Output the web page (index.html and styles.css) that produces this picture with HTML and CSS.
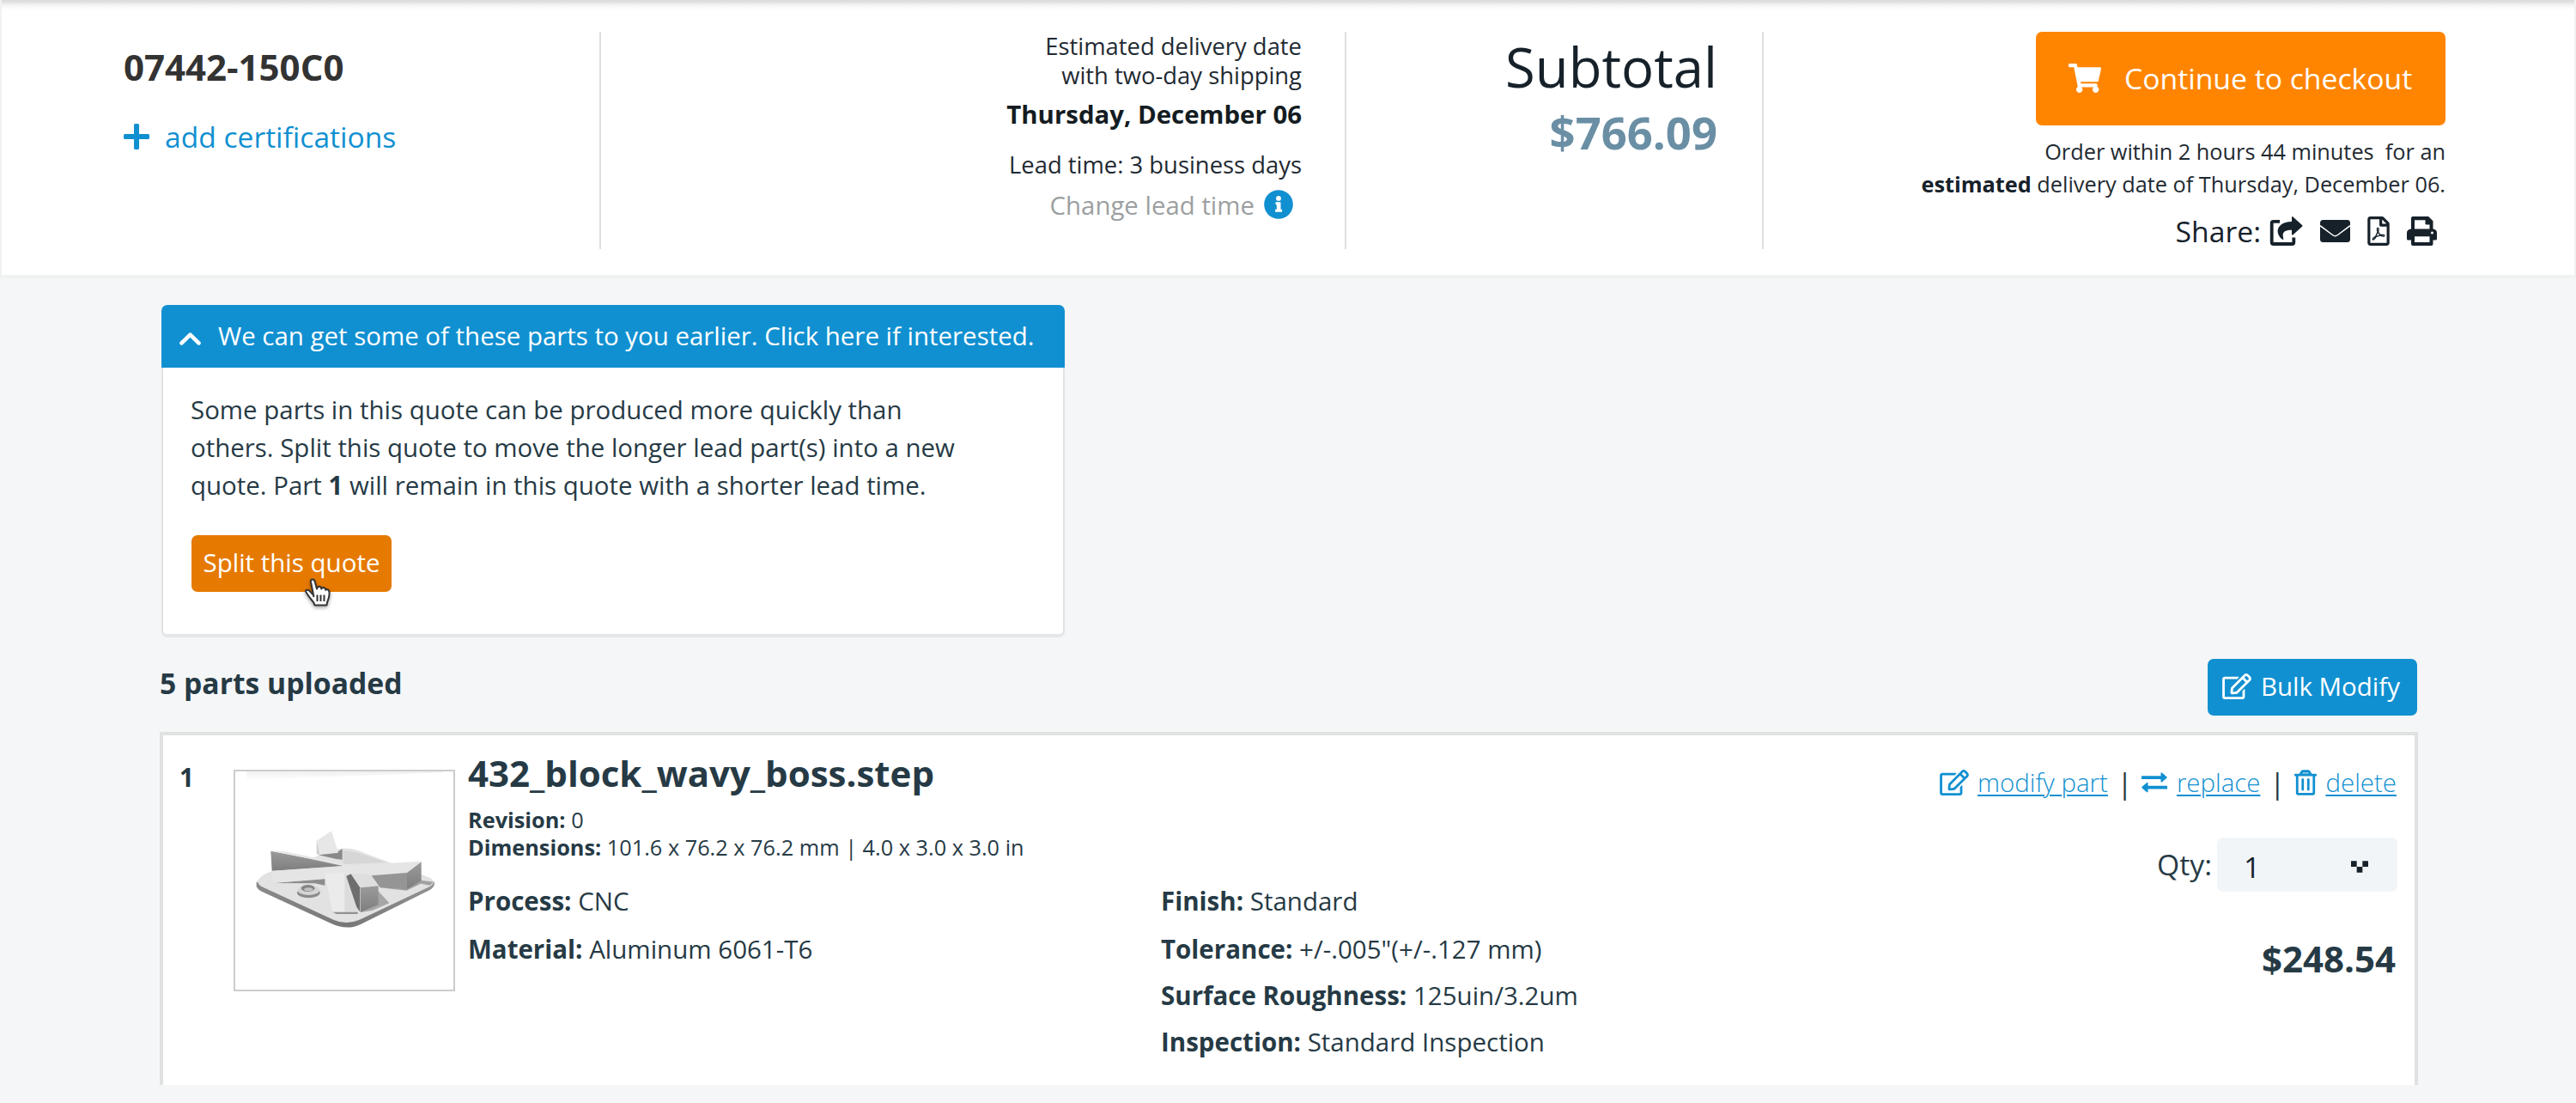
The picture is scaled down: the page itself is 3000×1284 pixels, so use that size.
FILE: index.html
```
<!DOCTYPE html>
<html lang="en">
<head>
<meta charset="utf-8">
<title>Quote 07442-150C0</title>
<link rel="stylesheet" href="styles.css">
</head>
<body>
<svg class="defs" aria-hidden="true">
  <symbol id="edit" viewBox="0 0 576 512"><path d="M402.3 344.9l32-32c5-5 13.7-1.5 13.7 5.7V464c0 26.5-21.5 48-48 48H48c-26.5 0-48-21.5-48-48V112c0-26.5 21.5-48 48-48h273.5c7.1 0 10.7 8.6 5.7 13.7l-32 32c-1.5 1.5-3.5 2.3-5.7 2.3H48v352h352V350.5c0-2.1.8-4.1 2.3-5.6zm156.6-201.8L296.3 405.7l-90.4 10c-26.2 2.9-48.5-19.2-45.6-45.6l10-90.4L432.9 17.1c22.9-22.9 59.9-22.9 82.7 0l43.2 43.2c22.9 22.9 22.9 60 .1 82.8zM460.1 174L402 115.9 216.2 301.8l-7.3 65.3 65.3-7.3L460.1 174zm64.8-79.7l-43.2-43.2c-4.1-4.1-10.8-4.1-14.8 0L436 82l58.1 58.1 30.9-30.9c4-4.2 4-10.8-.1-14.9z"/></symbol>
</svg>

<header class="summary">
  <section class="col col-quote">
    <h1 class="quote-id">07442-150C0</h1>
    <a class="add-cert">
      <svg class="icon-plus" viewBox="0 0 30 30"><path d="M12 1.500q0-1.500 1.500-1.500h3q1.500 0 1.500 1.500V12h10.500q1.500 0 1.500 1.500v3q0 1.500-1.500 1.500H18v10.500q0 1.500-1.500 1.500h-3q-1.500 0-1.500-1.500V18H1.500Q0 18 0 16.500v-3Q0 12 1.500 12H12z"/></svg>
      <span>add certifications</span>
    </a>
  </section>

  <section class="col col-delivery">
    <p class="small">Estimated delivery date<br>with two-day shipping</p>
    <p class="date">Thursday, December 06</p>
    <p class="small lead">Lead time: 3 business days</p>
    <p class="change">
      <span>Change lead time</span>
      <svg class="icon-info" viewBox="0 0 34 34"><circle cx="17" cy="17" r="16.800" fill="#1190d1"/><path fill="#fff" d="M17 7a2.900 2.900 0 1 1 0 5.800a2.900 2.900 0 0 1 0-5.800zM13.500 14.300h6v8.400h1.600v3h-8v-3h1.700v-5.400h-1.300z"/></svg>
    </p>
  </section>

  <section class="col col-total">
    <p class="subtotal">Subtotal</p>
    <p class="amount">$766.09</p>
  </section>

  <section class="col-checkout">
    <button class="checkout">
      <svg class="icon-cart" viewBox="0 0 576 512"><path d="M528.12 301.319l47.273-208C578.806 78.301 567.391 64 551.99 64H159.208l-9.166-44.81C147.758 8.021 137.93 0 126.529 0H24C10.745 0 0 10.745 0 24v16c0 13.255 10.745 24 24 24h69.883l70.248 343.435C147.325 417.1 136 435.222 136 456c0 30.928 25.072 56 56 56s56-25.072 56-56c0-15.674-6.447-29.835-16.824-40h209.647C430.447 426.165 424 440.326 424 456c0 30.928 25.072 56 56 56s56-25.072 56-56c0-22.172-12.888-41.332-31.579-50.405l5.517-24.276c3.413-15.018-8.002-29.319-23.403-29.319H218.117l-6.545-32h293.145c11.206 0 20.92-7.754 23.403-18.681z"/></svg>
      <span>Continue to checkout</span>
    </button>
    <p class="order-by">Order within 2 hours 44 minutes&nbsp; for an<br><b>estimated</b> delivery date of Thursday, December 06.</p>
    <div class="share">
      <span class="share-label">Share:</span>
      <svg class="icon-share" viewBox="0 0 39 34"><path fill="none" stroke="#16212a" stroke-width="3.800" stroke-linejoin="round" d="M12 5.900H4.500q-1.800 0-1.800 1.800V30.200q0 1.800 1.800 1.800H26.500q1.800 0 1.800-1.800V24.500"/><path fill="#16212a" d="M26 1.200q0-1.900 1.500-.6L38 10q.9.900 0 1.800L27.500 21.200q-1.500 1.200-1.500-.6V15.800c-7.500 0-12 2-9.800 9.500q.5 2.500-1.500 1.200C5.500 19 8.500 6.500 26 6.100z"/></svg>
      <svg class="icon-mail" viewBox="0 0 35 26"><rect width="35" height="26" rx="3.500" fill="#16212a"/><path fill="none" stroke="#fff" stroke-width="1.500" d="M0 6.700L14.500 17.500Q17.500 19.800 20.500 17.500L35 6.700"/></svg>
      <svg class="icon-pdf" viewBox="0 0 384 512"><path d="M369.9 97.9L286 14C277 5 264.8-.1 252.1-.1H48C21.5 0 0 21.5 0 48v416c0 26.500 21.500 48 48 48h288c26.500 0 48-21.500 48-48V131.9c0-12.700-5.100-25-14.100-34zM332.1 128H256V51.9l76.1 76.1zM48 464V48h160v104c0 13.300 10.700 24 24 24h104v288H48zm250.2-143.700c-12.200-12-47-8.700-64.400-6.500-17.200-10.500-28.700-25-36.800-46.300 3.900-16.100 10.100-40.600 5.400-56-4.200-26.200-37.800-23.600-42.600-5.900-4.400 16.100-.4 38.500 7 67.100-10 23.900-24.900 56-35.400 74.400-20 10.300-47 26.200-51 46.200-3.300 15.800 26 55.200 76.100-31.200 22.400-7.400 46.800-16.500 68.400-20.100 18.900 10.200 41 17 55.800 17 25.500 0 28-28.200 17.500-38.700zm-198.100 77.800c5.100-13.700 24.500-29.500 30.400-35-19 30.300-30.400 35.700-30.400 35zm81.600-190.600c7.400 0 6.700 32.100 1.800 40.800-4.400-13.900-4.300-40.800-1.800-40.800zm-24.400 136.600c9.700-16.900 18-37 24.700-54.700 8.300 15.100 18.900 27.200 30.100 35.500-20.800 4.300-38.900 13.100-54.800 19.200zm131.600-5s-5 6-37.300-7.800c35.100-2.600 40.900 5.400 37.300 7.800z"/></svg>
      <svg class="icon-print" viewBox="0 0 35 34"><path fill-rule="evenodd" d="M5 2q0-2 2-2H25.200L30.500 5.300V14.500q4.500.5 4.500 4.500V26q0 1.500-1.500 1.500H30.500V32q0 2-2 2H7q-2 0-2-2V27.500H1.500Q0 27.500 0 26V19q0-4 5-4.500zM9 4.200V14.500H26.500V9.500H23q-1.500 0-1.500-1.500V4.200zM9 23.300V30H26.500V23.300z"/><circle cx="29.500" cy="19" r="1.500" fill="#fff"/></svg>
    </div>
  </section>
</header>

<main class="content">
  <section class="promo">
    <div class="promo-head">
      <svg class="icon-chevron" viewBox="0 0 25 15"><path fill="none" stroke="#fff" stroke-width="4.600" stroke-linecap="round" stroke-linejoin="round" d="M2.500 12.300L12.500 2.700L22.500 12.300"/></svg>
      <span>We can get some of these parts to you earlier. Click here if interested.</span>
    </div>
    <div class="promo-body">
      <p class="promo-text">Some parts in this quote can be produced more quickly than<br>others. Split this quote to move the longer lead part(s) into a new<br>quote. Part <b>1</b> will remain in this quote with a shorter lead time.</p>
      <button class="split">Split this quote
        <svg class="cursor" viewBox="0 0 34 38"><path fill="#fff" stroke="#333" stroke-width="2" stroke-linejoin="round" d="M11.500 22L8 4.500Q7.500 1.500 10 1.500Q12 1.500 12.700 4L15 12.500Q15.800 9.500 18 9.700Q20 9.800 20.300 12.500Q21.200 10.500 23 11Q24.700 11.300 25.200 13.800Q26 12.700 27.500 13.300Q29.700 14.200 29.600 17.500Q29.500 22 28 25.500Q26.700 28.500 26.500 31.500H12.500Q11.500 28 9 25.500Q6.500 22.500 3.500 18Q1 14.700 3 13.800Q5.500 13 8 16.500L10 19"/><path stroke="#333" stroke-width="2" d="M15.500 19.500V27M19.500 19.500V27M23.500 19.500V27"/></svg>
      </button>
    </div>
  </section>

  <div class="parts-head">
    <h2 class="parts-title">5 parts uploaded</h2>
    <button class="bulk"><svg class="icon-edit"><use href="#edit"/></svg><span>Bulk Modify</span></button>
  </div>

  <article class="part">
    <div class="part-num">1</div>
    <svg class="thumb" viewBox="42 54 762 762">
      <defs>
        <linearGradient id="rim" x1="0" y1="0" x2="1" y2="0"><stop offset="0" stop-color="#8a8a8a"/><stop offset=".5" stop-color="#777"/><stop offset="1" stop-color="#929292"/></linearGradient>
        <linearGradient id="wall" x1="0" y1="0" x2="0" y2="1"><stop offset="0" stop-color="#9b9b9b"/><stop offset="1" stop-color="#7e7e7e"/></linearGradient>
        <linearGradient id="glow" x1="0" y1="0" x2="0" y2="1"><stop offset="0" stop-color="#f0f0f0"/><stop offset="1" stop-color="#fff"/></linearGradient>
        <filter id="soft" x="-5%" y="-5%" width="110%" height="110%"><feGaussianBlur stdDeviation="2"/></filter>
      </defs>
      <path fill="url(#glow)" d="M82 54H766V58L82 84z"/>
      <g filter="url(#soft)">
        <path fill="url(#rim)" d="M116 440V456Q120 466 134 473L372 583Q432 612 480 588L722 468Q740 458 738 440z"/>
        <path fill="#e2e2e2" d="M124 430Q140 410 180 400L400 326Q430 318 470 330L722 425Q748 440 722 456L476 572Q430 592 385 572L132 455Q114 442 124 430z"/>
        <path fill="#d6d6d6" d="M418 330L470 338L570 372L420 378z"/>
        <path fill="#a6a6a6" d="M536 466L580 514L520 540L478 546z"/>
        <path fill="#898989" d="M330 345L404 332L416 324V362L395 360z"/>
        <path fill="#e7e7e7" d="M326 296L378 262L402 338L332 346z"/>
        <path fill="#cfcfcf" d="M326 296L336 340L332 346L326 340z"/>
        <path fill="url(#wall)" d="M166 332L430 383L170 401z"/>
        <path fill="#e5e5e5" d="M166 330L215 334L440 380L428 386z"/>
        <path fill="#8d8d8d" d="M172 444L355 428V452L320 445z"/>
        <path fill="#e5e5e5" d="M170 402L430 384L580 374L692 368L642 408L520 414L434 416L354 430L174 444z"/>
        <path fill="url(#wall)" d="M642 408L692 370V436L642 466z"/>
        <path fill="#959595" d="M518 418L642 408V466L548 460z"/>
        <path fill="#7f7f7f" d="M548 460L642 465L692 434L735 440L722 452L690 446L640 470z" opacity=".65"/>
        <path fill="#ebebeb" d="M354 410L434 408L470 545H382z"/>
        <path fill="#dcdcdc" d="M424 410L434 412L470 545H424z"/>
        <path fill="#919191" d="M382 545H470V552H396z"/>
        <path fill="#6e6e6e" d="M430 420L446 412L478 460V545L466 528z"/>
        <path fill="#dedede" d="M446 410L514 414L542 454L480 458z"/>
        <path fill="url(#wall)" d="M480 460L542 454V520L480 545z"/>
        <ellipse cx="298" cy="478" rx="40" ry="18" fill="#8b8b8b"/>
        <ellipse cx="298" cy="469" rx="38" ry="17" fill="#d4d4d4"/>
        <ellipse cx="296" cy="462" rx="24" ry="12" fill="#858585"/>
        <ellipse cx="298" cy="466" rx="15" ry="6" fill="#c2c2c2"/>
      </g>
    </svg>
    <div class="info">
      <h3 class="filename">432_block_wavy_boss.step</h3>
      <p class="meta"><b>Revision:</b> 0<br><b>Dimensions:</b> 101.6 x 76.2 x 76.2 mm | 4.0 x 3.0 x 3.0 in</p>
      <div class="specs">
        <p><b>Process:</b> CNC</p><p><b>Finish:</b> Standard</p>
        <p><b>Material:</b> Aluminum 6061-T6</p><p><b>Tolerance:</b> +/-.005"(+/-.127 mm)</p>
        <p class="spec-right"><b>Surface Roughness:</b> 125uin/3.2um</p>
        <p class="spec-right"><b>Inspection:</b> Standard Inspection</p>
      </div>
    </div>
    <div class="side">
      <div class="actions">
        <a><svg class="icon-edit"><use href="#edit"/></svg><u>modify part</u></a>
        <span class="pipe">|</span>
        <a><svg class="icon-swap" viewBox="0 0 30 24"><path d="M0 4.300H22.500V1.300q0-1.800 1.500-.6L29.300 5.200q.9.800 0 1.600L24 11.300q-1.500 1.200-1.500-.6V7.900H0zM30 15.800H7.500V12.900q0-1.800-1.500-.6L.7 16.800q-.9.800 0 1.600L6 22.900q1.500 1.200 1.500-.6V19.400H30z"/></svg><u>replace</u></a>
        <span class="pipe">|</span>
        <a><svg class="icon-trash" viewBox="0 0 448 512"><path fill="#1190d1" opacity=".5" d="M173 20H275L310 90H138z"/><path d="M268 416h24a12 12 0 0 0 12-12V188a12 12 0 0 0-12-12h-24a12 12 0 0 0-12 12v216a12 12 0 0 0 12 12zM432 80h-82.410l-34-56.700A48 48 0 0 0 274.410 0H173.590a48 48 0 0 0-41.160 23.300L98.410 80H16A16 16 0 0 0 0 96v16a16 16 0 0 0 16 16h16v336a48 48 0 0 0 48 48h288a48 48 0 0 0 48-48V128h16a16 16 0 0 0 16-16V96a16 16 0 0 0-16-16zM171.840 50.910A6 6 0 0 1 177 48h94a6 6 0 0 1 5.150 2.910L293.610 80H154.390zM368 464H80V128h288zm-212-48h24a12 12 0 0 0 12-12V188a12 12 0 0 0-12-12h-24a12 12 0 0 0-12 12v216a12 12 0 0 0 12 12z"/></svg><u>delete</u></a>
      </div>
      <div class="qty">
        <span>Qty:</span>
        <div class="select"><span>1</span><svg class="icon-caret" viewBox="0 0 3 2"><path d="M0 0H1V1H2V0H3V1H2V2H1V1H0z"/></svg></div>
      </div>
      <p class="price">$248.54</p>
    </div>
  </article>
</main>
</body>
</html>
```
FILE: styles.css
```
* { box-sizing: border-box; margin: 0; padding: 0; }
body {
  font-family: "Open Sans", "Noto Sans", sans-serif;
  background: #f5f6f8;
  color: #263a45;
  width: 3000px;
  height: 1284px;
  overflow: hidden;
}
button { font-family: inherit; border: 0; color: #fff; }
svg { display: block; flex: none; fill: currentColor; }
.defs { width: 0; height: 0; position: absolute; }

/* Quote summary bar */
.summary {
  display: flex;
  height: 324px;
  padding-top: 37px;
  background: linear-gradient(#dbdbdb 0, #dedede 2px, #f0f0f0 5px, #fbfbfb 9px, #fff 13px);
  border-bottom: 4px solid #f0f1f1;
  box-shadow: inset 2px 0 #f2f2f2, inset -2px 0 #f2f2f2;
  color: #1f2a32;
}
.col { height: 253px; border-right: 2px solid #dfdfdf; }
.col-quote { width: 700px; padding: 15px 0 0 144px; }
.quote-id { font-size: 42px; line-height: 52px; color: #333; }
.add-cert {
  display: flex; align-items: center; gap: 18px; margin-top: 32px;
  font-size: 33.6px; line-height: 46px; color: #1190d1;
}
.icon-plus { width: 30px; height: 30px; }

.col-delivery { width: 868px; padding-right: 50px; text-align: right; }
.small { font-size: 27.4px; line-height: 34px; }
.date { font-size: 29.4px; line-height: 40px; font-weight: 700; margin-top: 8px; color: #141c22; }
.lead { margin-top: 22px; }
.change {
  display: flex; justify-content: flex-end; align-items: center; gap: 11px;
  margin-top: 10px; padding-right: 10px;
  font-size: 29.4px; line-height: 40px; color: #9c9fa1;
}
.icon-info { width: 34px; height: 34px; margin-top: -2px; }

.col-total { width: 486px; padding: 5px 52px 0 0; text-align: right; }
.subtotal { font-size: 63.4px; line-height: 72px; color: #16212a; }
.amount { font-size: 52.6px; line-height: 60px; font-weight: 700; margin-top: 10px; color: #6a8fa5; }

.col-checkout {
  flex: 1; padding-right: 152px;
  display: flex; flex-direction: column; align-items: flex-end; text-align: right;
}
.checkout {
  display: flex; align-items: center; gap: 27px;
  width: 477px; height: 109px; padding: 0 0 1px 38px;
  border-radius: 7px; background: #ff8500; font-size: 33.7px;
}
.icon-cart { width: 38px; height: 34px; }
.order-by { margin-top: 11px; font-size: 25.3px; line-height: 38px; }
.order-by b { color: #16212a; }
.share {
  display: flex; align-items: center; margin-top: 13px; padding-right: 10px;
  font-size: 33.7px; line-height: 46px; color: #16212a;
}
.share-label { margin-right: 10px; }
.icon-share { width: 39px; height: 34px; margin-right: 20px; }
.icon-mail { width: 35px; height: 26px; margin-right: 20px; }
.icon-pdf { width: 26px; height: 34px; margin-right: 20px; }
.icon-print { width: 35px; height: 34px; }

/* Faster-delivery offer */
.content { padding: 31px 184px 0 186px; }
.promo {
  width: 1052px; height: 387px; margin-left: 2px;
  border: 2px solid #dfe2e3; border-top: 0; border-bottom: 4px solid #e4e7e7;
  border-radius: 7px; background: #fff;
}
.promo-head {
  display: flex; align-items: center; gap: 20px;
  height: 73px; margin: 0 -2px; padding: 0 0 1px 21px;
  border-radius: 7px 7px 0 0; background: #1190d1; color: #fff;
  font-size: 29.45px;
}
.icon-chevron { width: 25px; height: 15px; margin-top: 6px; }
.promo-body { padding: 27px 0 0 32px; }
.promo-text { font-size: 29.45px; line-height: 44px; }
.split {
  position: relative; display: block;
  width: 233px; height: 66px; margin: 36px 0 0 1px; padding-bottom: 3px;
  border-radius: 7px; background: #e67a00; font-size: 29.5px;
}
.cursor {
  position: absolute; left: 131px; top: 50px; width: 34px; height: 38px;
  filter: drop-shadow(0 2px 2px rgba(0, 0, 0, .35));
}

/* Parts list */
.parts-head {
  display: flex; justify-content: space-between; align-items: center;
  height: 67px; margin-top: 24px; padding-right: 1px;
}
.parts-title { font-size: 33.7px; line-height: 46px; padding-bottom: 9px; }
.bulk {
  display: flex; align-items: center; gap: 11px;
  width: 244px; height: 66px; padding: 0 0 1px 17px;
  border-radius: 7px; background: #1190d1; font-size: 29.45px;
}
.icon-edit { width: 34px; height: 30px; }
.part {
  display: flex; height: 411px; margin-top: 19px;
  border: solid #e0e2e2; border-width: 4px 4px 0; background: #fff;
}
.part-num { width: 82px; padding: 29px 0 0 19px; font-size: 29.5px; line-height: 40px; font-weight: 700; }
.thumb { width: 258px; height: 258px; margin-top: 40px; border: 2px solid #ccc; }
.info { flex: 1; padding: 18px 0 0 15px; }
.filename { font-size: 42.03px; line-height: 52px; }
.meta { margin-top: 12px; font-size: 25.3px; line-height: 32px; }
.specs {
  display: grid; grid-template-columns: 807px 1fr; grid-template-rows: 56px 55px 54px 54px;
  margin-top: 19px; font-size: 29.5px; line-height: 56px;
}
.spec-right { grid-column: 2; line-height: 54px; }
.side {
  display: flex; flex-direction: column; align-items: flex-end;
  padding: 33px 20px 0 0;
}
.actions { display: flex; align-items: center; gap: 10.5px; padding-right: 1px; font-size: 29.45px; line-height: 44px; }
.actions a { display: flex; align-items: center; gap: 10.5px; font-weight: 300; color: #1190d1; }
.actions u { text-decoration-thickness: 2px; text-underline-offset: 3px; }
.pipe { font-size: 33.7px; }
.icon-swap { width: 30px; height: 24px; }
.icon-trash { width: 26px; height: 30px; }
.qty { display: flex; align-items: center; gap: 6px; margin-top: 42px; font-size: 33.7px; }
.qty > span { padding-bottom: 2px; }
.select {
  display: flex; align-items: center; justify-content: space-between;
  width: 210px; height: 63px; padding: 5px 34px 0 31px;
  border-radius: 7px; background: #f2f5f8; color: #16212a; font-size: 33.7px;
}
.icon-caret { width: 20px; height: 14px; }
.price { margin-top: 52px; padding-right: 2px; font-size: 42.03px; line-height: 52px; font-weight: 700; }
```
